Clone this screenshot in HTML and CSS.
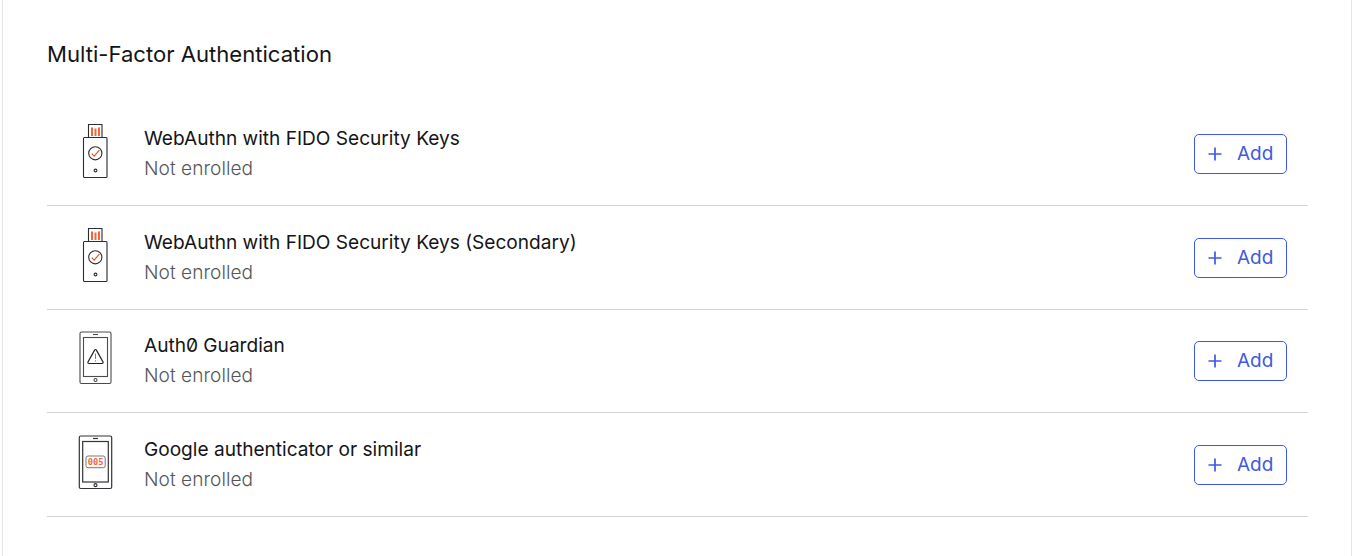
FILE: index.html
```
<!DOCTYPE html>
<html lang="en">
<head>
<meta charset="utf-8">
<title>Multi-Factor Authentication</title>
<link rel="stylesheet" href="styles.css">
</head>
<body>
<svg class="defs" aria-hidden="true">
  <symbol id="key" viewBox="0 0 50 60">
    <g fill="none" stroke="#2b2b30" stroke-width="1.100">
      <path d="M18.500 17V3.500h13.500V17"/>
      <rect x="13.500" y="16.500" width="23.500" height="40" rx="1"/>
      <circle cx="25.300" cy="32.300" r="6.600"/>
      <circle cx="25.500" cy="49.500" r="1.400"/>
    </g>
    <path d="M22 6.500v8.500M25.500 7.500v7.500M29 6.500v8.500" stroke="#f0663c" stroke-width="2"/>
    <path d="M21.700 32.700l2.500 2.500 5.200-6" fill="none" stroke="#eb5424" stroke-width="1.200"/>
  </symbol>
  <symbol id="guardian" viewBox="0 0 50 60">
    <g fill="none" stroke="#4a4a4f" stroke-width="1.100">
      <rect x="10" y="4" width="31" height="51.500" rx="1.500"/>
      <rect x="13.500" y="9.500" width="24" height="39"/>
      <circle cx="25.500" cy="52" r="1.500"/>
      <path d="M23 6.500h5"/>
      <path d="M24.600 22.100q.9-1.200 1.800 0l6.600 11.800q.5 1.500-1 1.600H19q-1.500-.1-1-1.600z" stroke="#222228" stroke-width="1.200"/>
    </g>
    <path d="M25.500 25.500v5.500M25.500 32.300v1.200" stroke="#eb5424" stroke-width="1"/>
  </symbol>
  <symbol id="otp" viewBox="0 0 50 60">
    <g fill="none" stroke="#333338" stroke-width="1.200">
      <rect x="9.300" y="4" width="32.400" height="52.500" rx="1.500"/>
      <rect x="12.700" y="9.500" width="25.600" height="40.500"/>
      <circle cx="25.500" cy="53.200" r="1.500"/>
      <path d="M23 6.500h5"/>
    </g>
    <rect x="16" y="24" width="19.200" height="11.700" rx="2" fill="#fff" stroke="#77777b"/>
    <text class="otp-code" x="25.600" y="33" text-anchor="middle">005</text>
  </symbol>
  <symbol id="plus" viewBox="0 0 14 14"><path d="M7 .5v13M.5 7h13" stroke="#3f59e4" stroke-width="1.700"/></symbol>
</svg>
<main class="card">
  <h1 class="heading">Multi-Factor Authentication</h1>
  <ul class="factors">
    <li class="factor">
      <svg class="icon"><use href="#key"/></svg>
      <div class="details"><div class="name">WebAuthn with FIDO Security Keys</div><div class="status">Not enrolled</div></div>
      <button class="add"><svg class="plus"><use href="#plus"/></svg>Add</button>
    </li>
    <li class="factor">
      <svg class="icon"><use href="#key"/></svg>
      <div class="details"><div class="name">WebAuthn with FIDO Security Keys (Secondary)</div><div class="status">Not enrolled</div></div>
      <button class="add"><svg class="plus"><use href="#plus"/></svg>Add</button>
    </li>
    <li class="factor">
      <svg class="icon"><use href="#guardian"/></svg>
      <div class="details"><div class="name">Auth0 Guardian</div><div class="status">Not enrolled</div></div>
      <button class="add"><svg class="plus"><use href="#plus"/></svg>Add</button>
    </li>
    <li class="factor">
      <svg class="icon"><use href="#otp"/></svg>
      <div class="details"><div class="name">Google authenticator or similar</div><div class="status">Not enrolled</div></div>
      <button class="add"><svg class="plus"><use href="#plus"/></svg>Add</button>
    </li>
  </ul>
</main>
</body>
</html>
```
FILE: styles.css
```
* { box-sizing: border-box; }
body { margin: 0; background: #fff; font-family: Inter, sans-serif; color: #141416; overflow: hidden; }
.defs { display: none; }
.card {
  height: 556px;
  margin: 0 7px 0 2px;
  padding: 39px 43px 0 44px;
  border: solid #e5e5e5;
  border-width: 0 1px;
}
.heading { margin: 0; font-size: 22.100px; line-height: 30px; font-weight: 400; }
.factors { list-style: none; margin: 33.650px 0 0; padding: 0; }
.factor {
  display: flex;
  align-items: center;
  height: 103.600px;
  padding: 0 21px 0 23px;
  border-bottom: 1px solid #d3d3d3;
}
.icon { width: 50px; height: 60px; margin-bottom: 5.700px; }
.details { flex: 1; margin-left: 24px; font-size: 19.080px; line-height: 30px; font-feature-settings: "zero"; }
.status { color: #55565a; font-weight: 300; letter-spacing: .05px; }
.add {
  display: flex;
  align-items: center;
  gap: 15px;
  width: 93px;
  height: 40px;
  padding: 0 0 1px 13px;
  border: 1px solid #3f59e4;
  border-radius: 5px;
  background: #fff;
  color: #3f59e4;
  font: 400 19px Inter, sans-serif;
}
.plus { width: 14px; height: 14px; margin-top: 1px; }
.otp-code { font: bold 8.700px "DejaVu Sans Mono", monospace; fill: #f0663c; }
```
